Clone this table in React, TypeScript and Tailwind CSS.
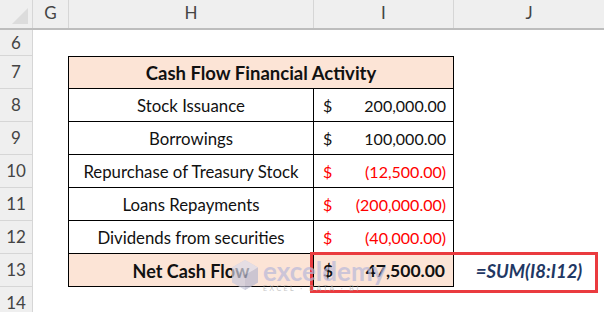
import React from "react";

const font = { fontFamily: "'Lato', 'Open Sans', sans-serif" };

type Row = { n: number; label: string; val: string; red?: boolean };

const rows: Row[] = [
  { n: 8, label: "Stock Issuance", val: "200,000.00" },
  { n: 9, label: "Borrowings", val: "100,000.00" },
  { n: 10, label: "Repurchase of Treasury Stock", val: "(12,500.00)", red: true },
  { n: 11, label: "Loans Repayments", val: "(200,000.00)", red: true },
  { n: 12, label: "Dividends from securities", val: "(40,000.00)", red: true },
];

function RowHead({ n, h }: { n: number | string; h: string }) {
  return (
    <div
      className={`w-[33px] shrink-0 ${h} bg-[#efefef] border-r border-b border-[#d6d6d6] flex items-center justify-center text-[17px] text-[#444]`}
    >
      {n}
    </div>
  );
}

export default function App() {
  return (
    <div className="w-[604px] h-[312px] bg-white overflow-hidden relative text-[#111]" style={font}>
      {/* column header */}
      <div className="flex h-[30px] bg-[#efefef] border-b-2 border-[#bdbdbd] text-[17px] text-[#444]">
        <div className="w-[33px] shrink-0 border-r border-[#d6d6d6] relative">
          <div className="absolute right-[4px] bottom-[4px] w-0 h-0 border-l-[16px] border-l-transparent border-b-[16px] border-b-[#dcdcdc]" />
        </div>
        <div className="w-[36px] shrink-0 border-r border-[#d6d6d6] flex items-end justify-center pb-[3px]">G</div>
        <div className="w-[245px] shrink-0 border-r border-[#d6d6d6] flex items-end justify-center pb-[3px]">H</div>
        <div className="w-[140px] shrink-0 border-r border-[#d6d6d6] flex items-end justify-center pb-[3px]">I</div>
        <div className="flex-1 flex items-end justify-center pb-[3px]">J</div>
      </div>
      {/* row 6 */}
      <div className="flex h-[26px]">
        <RowHead n={6} h="h-[26px]" />
        <div className="flex-1" />
      </div>
      {/* row 7 */}
      <div className="flex h-[33px]">
        <RowHead n={7} h="h-[33px]" />
        <div className="w-[35px] shrink-0" />
        <div className="w-[386px] shrink-0 border border-black bg-[#fce4d6] flex items-center justify-center pt-[2px] font-bold text-[18.5px]">
          Cash Flow Financial Activity
        </div>
        <div className="flex-1" />
      </div>
      {rows.map((r) => (
        <div key={r.n} className="flex h-[33px]">
          <RowHead n={r.n} h="h-[33px]" />
          <div className="w-[35px] shrink-0" />
          <div className="w-[246px] shrink-0 border-l border-r border-b border-black flex items-center justify-center pt-[2px] text-[16.8px]">
            {r.label}
          </div>
          <div
            className={`w-[140px] shrink-0 border-r border-b border-black flex items-center justify-between pt-[2px] pl-[9px] pr-[7px] text-[16px] ${
              r.red ? "text-[#ff0000]" : ""
            }`}
          >
            <span>$</span>
            <span>{r.val}</span>
          </div>
          <div className="flex-1" />
        </div>
      ))}
      {/* row 13 */}
      <div className="flex h-[33px]">
        <RowHead n={13} h="h-[33px]" />
        <div className="w-[35px] shrink-0" />
        <div className="w-[246px] shrink-0 border-l border-r border-b border-black bg-[#fce4d6] flex items-center justify-center pt-[2px] font-bold text-[18px]">
          Net Cash Flow
        </div>
        <div className="w-[140px] shrink-0 border-r border-b border-black bg-[#fce4d6] flex items-center justify-between pt-[2px] pl-[9px] pr-[8px] font-bold text-[17.5px]">
          <span>$</span>
          <span>47,500.00</span>
        </div>
        <div className="flex-1 flex items-center justify-center pt-[2px] font-bold italic text-[18.5px] text-[#1f3864]">
          =SUM(I8:I12)
        </div>
      </div>
      {/* row 14 */}
      <div className="flex h-[33px]">
        <RowHead n={14} h="h-[33px]" />
        <div className="flex-1" />
      </div>

      {/* red highlight box */}
      <div className="absolute left-[310px] top-[252px] w-[288px] h-[41px] border-[3px] border-[#ea3b3f]" />

      {/* watermark */}
      <div className="absolute left-[231px] top-[259px] flex items-start gap-[4px] opacity-70 pointer-events-none">
        <svg width="28" height="32" viewBox="0 0 28 32">
          <polygon points="14,1 27,8.5 27,23.5 14,31 1,23.5 1,8.5" fill="#c9c9dc" />
          <polygon points="14,1 27,8.5 14,16 1,8.5" fill="#dcdcea" />
          <polygon points="14,16 27,8.5 27,23.5 14,31" fill="#b8b8cf" />
        </svg>
        <div className="flex flex-col leading-none">
          <span className="text-[26px] font-bold text-[#b8b8da] leading-[24px]">exceldemy</span>
          <span className="text-[7px] text-[#b0b0b0] tracking-[2.5px] mt-[2px]">EXCEL · DATA · BI</span>
        </div>
      </div>
    </div>
  );
}
